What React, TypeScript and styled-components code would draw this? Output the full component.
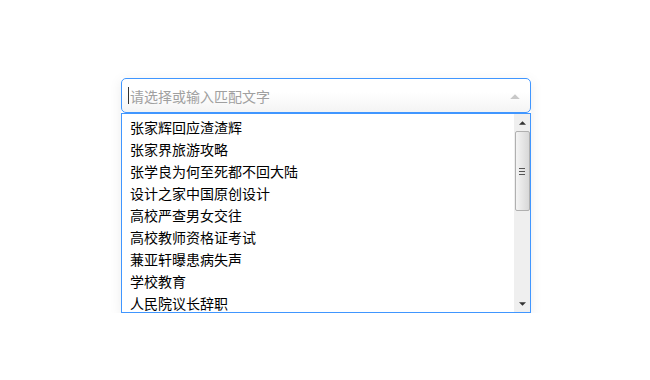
import React from 'react';
import styled, { createGlobalStyle } from 'styled-components';

const GlobalStyle = createGlobalStyle`
  html, body {
    margin: 0;
    padding: 0;
    background: #ffffff;
    font-family: "Liberation Sans", "Noto Sans CJK SC", sans-serif;
  }
`;

const Page = styled.div`
  padding: 78px 0 0 121px;
`;

const Combo = styled.div`
  width: 410px;
  box-shadow: 0 3px 12px rgba(0, 0, 0, 0.08);
`;

const InputBox = styled.div`
  height: 33px;
  border: 1px solid #4096ff;
  border-radius: 5px;
  background: linear-gradient(#ffffff 40%, #f4f4f4 100%);
  display: flex;
  align-items: center;
  padding: 0 10px 0 6px;
  box-sizing: content-box;
  width: calc(100% - 18px);
`;

const Caret = styled.span`
  width: 1px;
  height: 17px;
  background: #333;
  margin-right: 1px;
`;

const Placeholder = styled.span`
  flex: 1;
  font-size: 14px;
  color: #a0a0a0;
`;

const List = styled.div`
  height: 198px;
  border: 1px solid #4096ff;
  display: flex;
  background: #fff;
`;

const Items = styled.ul`
  flex: 1;
  margin: 0;
  padding: 3px 0 0;
  list-style: none;
  overflow: hidden;
`;

const Item = styled.li`
  height: 22px;
  line-height: 22px;
  padding-left: 8px;
  font-size: 14px;
  color: #000;
  white-space: nowrap;
`;

const Scrollbar = styled.div`
  width: 16px;
  background: #efefef;
  display: flex;
  flex-direction: column;
  align-items: center;
`;

const ArrowButton = styled.div`
  height: 16px;
  width: 16px;
  display: flex;
  align-items: center;
  justify-content: center;
`;

const Thumb = styled.div`
  width: 15px;
  height: 80px;
  margin-top: 1px;
  box-sizing: border-box;
  border: 1px solid #b0b0b0;
  border-radius: 2px;
  background: linear-gradient(90deg, #f4f4f4, #d8d8d8);
  display: flex;
  align-items: center;
  justify-content: center;
`;

const Track = styled.div`
  flex: 1;
`;

const Tri = ({ up, color = '#333', size = 7 }: { up?: boolean; color?: string; size?: number }) => (
  <svg width={size} height={Math.ceil(size / 2) + 1} viewBox="0 0 8 5">
    {up ? <polygon points="0,5 4,1 8,5" fill={color} /> : <polygon points="0,0 4,4 8,0" fill={color} />}
  </svg>
);

const items = [
  '张家辉回应渣渣辉',
  '张家界旅游攻略',
  '张学良为何至死都不回大陆',
  '设计之家中国原创设计',
  '高校严查男女交往',
  '高校教师资格证考试',
  '蒹亚轩曝患病失声',
  '学校教育',
  '人民院议长辞职',
];

export default function App() {
  return (
    <>
      <GlobalStyle />
      <Page>
        <Combo>
          <InputBox>
            <Caret />
            <Placeholder>请选择或输入匹配文字</Placeholder>
            <Tri up color="#c8c8c8" size={10} />
          </InputBox>
          <List>
            <Items>
              {items.map((t) => (
                <Item key={t}>{t}</Item>
              ))}
            </Items>
            <Scrollbar>
              <ArrowButton>
                <Tri up />
              </ArrowButton>
              <Thumb>
                <svg width="6" height="7" viewBox="0 0 6 7">
                  <rect x="0" y="0" width="6" height="1" fill="#555" />
                  <rect x="0" y="3" width="6" height="1" fill="#555" />
                  <rect x="0" y="6" width="6" height="1" fill="#555" />
                </svg>
              </Thumb>
              <Track />
              <ArrowButton>
                <Tri />
              </ArrowButton>
            </Scrollbar>
          </List>
        </Combo>
      </Page>
    </>
  );
}
